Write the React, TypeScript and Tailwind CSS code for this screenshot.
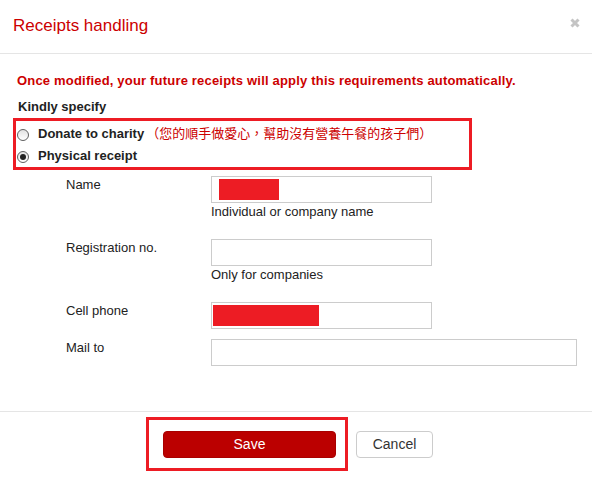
import { useState } from "react";

const fieldRows = [
  { label: "Name", help: "Individual or company name", mask: "w-[60px] ml-[7px]", wide: false },
  { label: "Registration no.", help: "Only for companies", mask: "", wide: false },
  { label: "Cell phone", help: "", mask: "w-[106px] ml-[1px]", wide: false },
  { label: "Mail to", help: "", mask: "", wide: true },
];

function Radio({ checked }: { checked: boolean }) {
  return (
    <span className="mt-[5px] flex h-[12px] w-[12px] shrink-0 items-center justify-center rounded-full border border-[#5f5f5f] bg-gradient-to-b from-[#e2e2e2] to-white">
      {checked && <span className="h-[6px] w-[6px] rounded-full bg-[#222]" />}
    </span>
  );
}

export default function App() {
  const [choice, setChoice] = useState<"donate" | "physical">("physical");

  return (
    <div className="h-[487px] w-[592px] bg-white font-['Liberation_Sans',Arial,sans-serif] text-[13px] text-[#222]">
      <div className="flex h-[54px] items-start justify-between border-b border-[#e5e5e5] pl-[13px] pr-[12px] pt-[16px]">
        <h2 className="text-[17px] leading-[20px] text-[#cc0000]">Receipts handling</h2>
        <button className="mt-[2px]" aria-label="Close">
          <svg width="10" height="10" viewBox="0 0 10 10">
            <path d="M1.5 1.5 L8.5 8.5 M8.5 1.5 L1.5 8.5" stroke="#c4c4c4" strokeWidth="3" />
          </svg>
        </button>
      </div>

      <div className="pt-[18px]">
        <p className="pl-[17px] font-bold leading-[18px] tracking-[0.19px] text-[#cc0000]">
          Once modified, your future receipts will apply this requirements automatically.
        </p>
        <p className="mt-[8px] pl-[18px] font-bold leading-[18px]">Kindly specify</p>

        <div className="ml-[13px] mt-[2px] flex h-[52px] w-[459px] flex-col gap-[2px] border-[3px] border-[#ed1c24] pl-[1px] pt-[3px]">
          <label className="flex h-[20px] items-start leading-[20px]" onClick={() => setChoice("donate")}>
            <Radio checked={choice === "donate"} />
            <span className="ml-[9px] font-bold">Donate to charity</span>
            <span className="ml-[2px] font-['Liberation_Sans','Noto_Sans_CJK_TC',sans-serif] text-[#cc0000]">
              （您的順手做愛心，幫助沒有營養午餐的孩子們）
            </span>
          </label>
          <label className="flex h-[20px] items-start leading-[20px]" onClick={() => setChoice("physical")}>
            <Radio checked={choice === "physical"} />
            <span className="ml-[9px] font-bold">Physical receipt</span>
          </label>
        </div>

        <div className="mt-[6px] flex flex-col gap-[10px]">
          {fieldRows.map((row) => (
            <div key={row.label} className="flex">
              <span className="w-[211px] shrink-0 pl-[66px] leading-[18px]">{row.label}</span>
              <div className="flex flex-col">
                <div
                  className={`flex h-[27px] items-center border border-[#cccccc] ${row.wide ? "w-[366px]" : "w-[221px]"}`}
                >
                  {row.mask && <span className={`h-[21px] bg-[#ed1c24] ${row.mask}`} />}
                </div>
                {row.help && <span className="pb-[8px] leading-[18px]">{row.help}</span>}
              </div>
            </div>
          ))}
        </div>
      </div>

      <div className="mt-[45px] flex items-start gap-[8px] border-t border-[#e5e5e5] pl-[146px] pt-[5px]">
        <div className="border-[3px] border-[#ed1c24] pb-[10px] pl-[14px] pr-[9px] pt-[11px]">
          <button className="h-[27px] w-[173px] rounded-[4px] border border-[#a80000] bg-[#bb0000] text-[14px] text-white">
            Save
          </button>
        </div>
        <button className="mt-[14px] h-[27px] w-[77px] rounded-[4px] border border-[#cccccc] bg-white text-[14px] text-[#333]">
          Cancel
        </button>
      </div>
    </div>
  );
}
